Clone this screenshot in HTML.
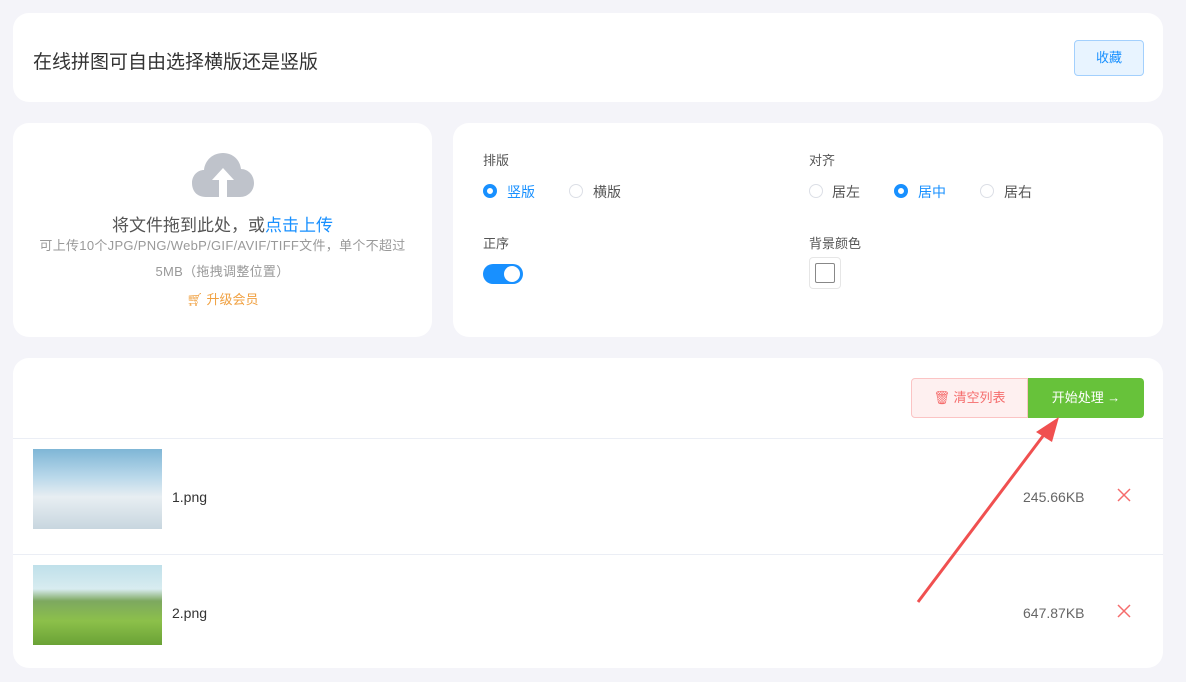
<!DOCTYPE html><html><head><meta charset="utf-8"><style>
*{margin:0;padding:0;box-sizing:border-box}
body{width:1186px;height:682px;background:#f4f4f9;font-family:"Liberation Sans","Noto Sans CJK SC",sans-serif;position:relative;overflow:hidden;color:#333}
.card{position:absolute;background:#fff;border-radius:16px}
.abs{position:absolute}
.radio{position:absolute;width:14px;height:14px;border-radius:50%;border:1px solid #dcdfe6;background:#fff}
.radio.on{border:4px solid #1890ff}
.lbl{position:absolute;font-size:14px;color:#555}
</style></head><body>
<div class="card" style="left:13px;top:13px;width:1150px;height:89px">
 <div class="abs" style="left:20px;top:34px;font-size:19px;color:#333">在线拼图可自由选择横版还是竖版</div>
 <div class="abs" style="left:1061px;top:27px;width:70px;height:36px;border:1px solid #a3d0fd;background:#e8f4ff;border-radius:4px;color:#1890ff;font-size:13px;text-align:center;line-height:34px">收藏</div>
</div>
<div class="card" style="left:13px;top:123px;width:419px;height:214px">
 <svg class="abs" style="left:179px;top:30px" width="62" height="45" viewBox="0 0 62 45"><path d="M14 44 C4 44 0 37 0 30 C0 22 6 17 12 17 C13 7 21 0 31 0 C41 0 48 7 49 16 C56 16 62 22 62 30 C62 38 56 44 48 44 Z" fill="#bfc3cb"/><path d="M31 15 L20 27 H27 V44 H35 V27 H42 Z" fill="#fff"/></svg>
 <div class="abs" style="left:0;width:419px;top:88px;text-align:center;font-size:17px;color:#555">将文件拖到此处，或<span style="color:#1890ff">点击上传</span></div>
 <div class="abs" style="left:0;width:419px;top:110px;text-align:center;font-size:13px;color:#999;line-height:26px;letter-spacing:0.3px">可上传10个JPG/PNG/WebP/GIF/AVIF/TIFF文件，单个不超过<br>5MB（拖拽调整位置）</div>
 <div class="abs" style="left:0;width:419px;top:166px;text-align:center;font-size:13px;color:#f0a040">🛒︎ 升级会员</div>
</div>
<div class="card" style="left:453px;top:123px;width:710px;height:214px">
 <div class="lbl" style="left:30px;top:27px;font-size:13px">排版</div>
 <div class="radio on" style="left:30px;top:61px"></div><div class="lbl" style="left:54px;top:59px;color:#1890ff">竖版</div>
 <div class="radio" style="left:116px;top:61px"></div><div class="lbl" style="left:140px;top:59px">横版</div>
 <div class="lbl" style="left:356px;top:27px;font-size:13px">对齐</div>
 <div class="radio" style="left:356px;top:61px"></div><div class="lbl" style="left:379px;top:59px">居左</div>
 <div class="radio on" style="left:441px;top:61px"></div><div class="lbl" style="left:465px;top:59px;color:#1890ff">居中</div>
 <div class="radio" style="left:527px;top:61px"></div><div class="lbl" style="left:551px;top:59px">居右</div>
 <div class="lbl" style="left:30px;top:110px;font-size:13px">正序</div>
 <div class="abs" style="left:30px;top:141px;width:40px;height:20px;border-radius:10px;background:#1890ff"><div class="abs" style="left:21px;top:2px;width:16px;height:16px;border-radius:50%;background:#fff"></div></div>
 <div class="lbl" style="left:356px;top:110px;font-size:13px">背景颜色</div>
 <div class="abs" style="left:356px;top:134px;width:32px;height:32px;border:1px solid #e6e6e6;border-radius:4px"><div class="abs" style="left:5px;top:5px;width:20px;height:20px;border:1px solid #888;border-radius:2px"></div></div>
</div>
<div class="card" style="left:13px;top:358px;width:1150px;height:310px">
 <div class="abs" style="left:898px;top:20px;width:117px;height:40px;border:1px solid #fbc4c4;background:#fef0f0;border-radius:4px 0 0 4px;color:#f56c6c;font-size:13px;line-height:38px;text-align:center">🗑︎ 清空列表</div>
 <div class="abs" style="left:1015px;top:20px;width:116px;height:40px;background:#67c23a;border-radius:0 4px 4px 0;color:#fff;font-size:13px;line-height:40px;text-align:center">开始处理 →</div>
 <div class="abs" style="left:0;top:80px;width:1150px;height:1px;background:#ebeef5"></div>
 <div class="abs" style="left:20px;top:91px;width:129px;height:80px;background:linear-gradient(180deg,#7fb6d6 0%,#b9d8ea 35%,#e8eef2 60%,#c8d6df 100%)"></div>
 <div class="abs" style="left:159px;top:131px;font-size:14px">1.png</div>
 <div class="abs" style="left:1010px;top:131px;font-size:14px;color:#666">245.66KB</div>
 <svg class="abs" style="left:1104px;top:130px" width="14" height="14"><path d="M1 1L13 13M13 1L1 13" stroke="#f56c6c" stroke-width="1.5"/></svg>
 <div class="abs" style="left:0;top:196px;width:1150px;height:1px;background:#ebeef5"></div>
 <div class="abs" style="left:20px;top:207px;width:129px;height:80px;background:linear-gradient(180deg,#bfe0ea 0%,#d8ecf0 30%,#7da860 45%,#8cc04a 70%,#6aa236 100%)"></div>
 <div class="abs" style="left:159px;top:247px;font-size:14px">2.png</div>
 <div class="abs" style="left:1010px;top:247px;font-size:14px;color:#666">647.87KB</div>
 <svg class="abs" style="left:1104px;top:246px" width="14" height="14"><path d="M1 1L13 13M13 1L1 13" stroke="#f56c6c" stroke-width="1.5"/></svg>
</div>
<svg class="abs" style="left:0;top:0" width="1186" height="682"><line x1="918" y1="602" x2="1046" y2="432" stroke="#f05050" stroke-width="3"/><path d="M1059 417 L1036 432 L1052 442 Z" fill="#f05050"/></svg>
</body></html>
